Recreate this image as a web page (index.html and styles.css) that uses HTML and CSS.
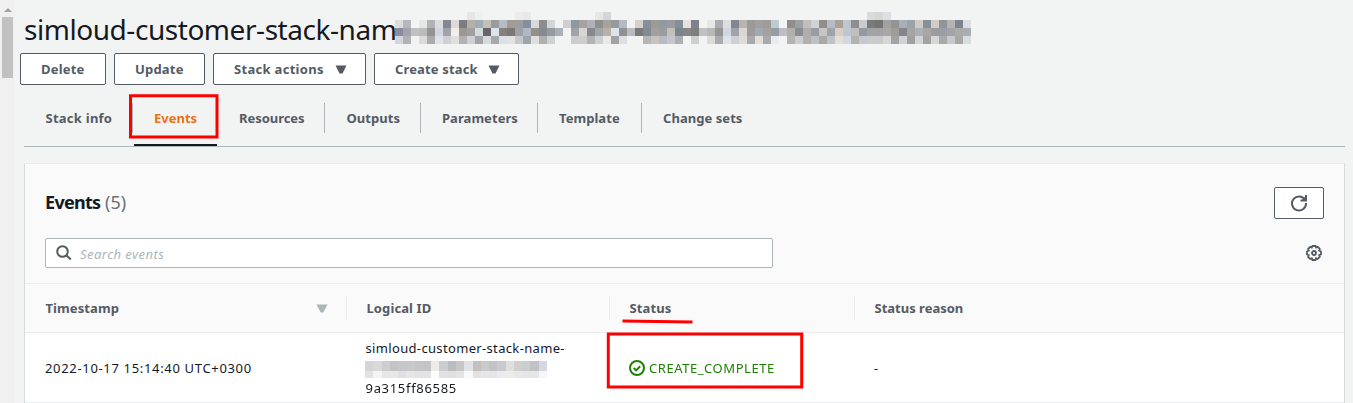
FILE: index.html
```html
<!DOCTYPE html>
<html lang="en"><head><meta charset="utf-8"><title>Stack events</title><link rel="stylesheet" href="styles.css"></head>
<body>
<div class="app">
<aside class="scroll"><i class="up"></i><i class="thumb"></i></aside>
<main>
<h1><span class="t-title">simloud-customer-stack-nam</span><canvas class="mask" id="mask" width="576" height="32"></canvas></h1>
<div class="actions">
<button class="w1"><span>Delete</span></button><button class="w2"><span>Update</span></button><button class="w3"><span>Stack actions</span><svg width="12" height="9"><path d="M.5 .5h11L7.5 8.5h-3z"/></svg></button><button class="w4"><span>Create stack</span><svg width="12" height="9"><path d="M.5 .5h11L7.5 8.5h-3z"/></svg></button>
</div>
<nav><a class="n1"><span>Stack info</span></a><a class="n2 active"><span>Events</span></a><a class="n3"><span>Resources</span></a><a class="n4"><span>Outputs</span></a><a class="n5"><span>Parameters</span></a><a class="n6"><span>Template</span></a><a class="n7"><span>Change sets</span></a></nav>
<section class="panel">
<header>
<div class="head"><h2><b>Events</b> <span>(5)</span></h2><button class="refresh"><svg width="18" height="18" viewBox="0 0 18 18"><path d="M15.2 6.2A7 7 0 1 0 16 9M16 1v5.5h-5.5" fill="none" stroke="#545b64" stroke-width="2"/><path d="M12 5.5l4-3.5v4z"/></svg></button></div>
<div class="filter"><div class="search"><svg width="16" height="16" viewBox="0 0 16 16"><circle cx="6.5" cy="6.5" r="5.3"/><path d="m10.3 10.3 4.5 4.2"/></svg><span>Search events</span></div>
<svg class="gear" width="16" height="16" viewBox="0 0 16 16"><path d="M6.5 1h3l.6 1.6 1.6-.7 2.1 2.1-.7 1.6 1.9.8v3l-1.9.8.7 1.7-2.1 2.1-1.6-.7-.6 1.7h-3l-.7-1.7-1.6.7L2.1 12l.7-1.7L1 9.5v-3l1.8-.9L2.1 4l2.1-2.1 1.6.7z"/><circle cx="8" cy="8" r="2"/></svg></div>
</header>
<div class="row th"><div class="c"><span>Timestamp</span><svg class="sort" width="12" height="9"><path d="M.5 .5h11L7.3 8.5h-2.6z"/></svg></div><div class="c"><span>Logical ID</span></div><div class="c"><span>Status</span></div><div class="c"><span>Status reason</span></div></div>
<div class="row td"><div class="c digits"><span>2022-10-17 15:14:40 UTC+0300</span></div><div class="c logical"><span>simloud-customer-stack-name-</span><canvas id="idmask" width="183" height="20"></canvas><span class="digits">9a315ff86585</span></div><div class="c status"><svg width="16" height="16" viewBox="0 0 16 16"><circle cx="8" cy="8" r="7"/><path d="m4.7 8 2.4 2.4 4.1-4.1"/></svg><span>CREATE_COMPLETE</span></div><div class="c"><span>-</span></div></div>
</section>
</main>
<svg class="marks" width="1353" height="403"><path d="M130.5 95.7H217V137H130.5zM608.3 334H801.7V387H608.3zM622.5 321l70 1"/></svg>
</div>
<script src="mask.js"></script>
</body></html>
```
FILE: styles.css
```css
*{box-sizing:border-box}
body{margin:0;background:#f2f3f3;font:13px/20px "Noto Sans",sans-serif;color:#16191f}
.app{display:flex;height:403px;overflow:hidden;position:relative}
.marks{position:absolute;left:0;top:0;fill:none;stroke:#f00;stroke-width:3;pointer-events:none}
.scroll{width:15px;background:#f0f0f0;padding:8px 2px;display:flex;flex-direction:column;align-items:center}
.up{border:4px solid transparent;border-top:0;border-bottom-color:#a3a3a3;margin-bottom:5px}
.thumb{width:11px;height:61px;background:#c1c1c1}
main{flex:1;display:flex;flex-direction:column}
h1{margin:12px 0 0 9px;height:41px;flex:none;font-size:28px;font-weight:400;line-height:34px;display:flex;align-items:flex-start;white-space:nowrap}
.t-title{width:371px;letter-spacing:-.45px}
.mask{flex:none}
.actions{display:flex;flex:none;gap:8px;margin-left:5px}
button{font:700 13px/20px "Noto Sans",sans-serif;letter-spacing:.3px;height:32px;border:1px solid #545b64;border-radius:2px;background:#fff;color:#545b64;padding:0 18px 0 20px;display:flex;align-items:center;justify-content:space-between;white-space:nowrap}
button svg{fill:#545b64}
.w1,.w2{letter-spacing:.2px}
.w1{width:86px}.w2{width:91px}.w3{width:153px}.w4{width:145px}
.w4{letter-spacing:.15px}
nav{display:flex;flex:none;margin:18px 8px 16px 9px;height:44px;border-bottom:1px solid #aab7b8;font-weight:700;color:#545b64;letter-spacing:.05px}
nav a{height:30px;padding:5px 0 5px 21px;border-right:1px solid #aab7b8;white-space:nowrap}
.n1{width:109px}.n2{width:84px}.n3{width:108px}.n4{width:96px}.n5{width:117px}.n6{width:104px}
nav .n1{letter-spacing:.25px;padding-left:21.5px}
nav .n3{padding-left:22px;letter-spacing:-.05px}
nav .n4{padding-left:21.5px}
nav .n7{border:0}
nav .active{color:#ec7211;height:43px;border-right:0;margin-left:1px;width:83px;padding-left:20px;border-bottom:2px solid #16191f;letter-spacing:0}
.panel{margin:0 8px 0 9px;height:250px;flex:none;border:1px solid #d5dbdb;border-top-color:#eaeded;background:#fff}
header{background:#fafafa;height:119px}
.head{display:flex;justify-content:space-between;padding:23px 20px 0}
h2{margin:-1px 0 1px;font-size:18px;font-weight:400;line-height:32px;letter-spacing:-.7px;word-spacing:.6px}
h2 span{color:#687078;letter-spacing:0}
.refresh{width:50px;padding:0 15px}
.filter{display:flex;justify-content:space-between;padding:19px 22px 0 20px;align-items:center}
.search{width:728px;height:30px;border:1px solid #aab7b8;border-radius:2px;background:#fff;display:flex;align-items:center;gap:8px;padding-left:10px;color:#aab7b8;font-style:italic;letter-spacing:.45px}
.search span{padding-top:2px}
.search svg,.gear{fill:none;stroke:#545b64;stroke-width:2}
.gear{stroke-width:1.8}
.row{display:grid;grid-template-columns:321px 263px 245px 1fr;border-top:1px solid #eaeded}
.th{height:49px;background:#fafafa;color:#545b64;font-weight:700;align-items:center;letter-spacing:.1px}
.th .c{height:24px;border-right:1px solid #eaeded;padding:0 18px 0 20.5px;justify-content:space-between}
.th .c+.c{padding-left:20.5px}
.th .c:nth-child(1){width:322px}
.th .c:nth-child(2){width:264px}
.th .c:nth-child(3){width:246px}
.th .c:nth-child(4){letter-spacing:0;border:0}
.sort{fill:#aab7b8}
.c{padding-left:20px;display:flex;align-items:center}
.td{height:71px;border-bottom:1px solid #eaeded}
.digits{letter-spacing:.67px}
.td .logical{flex-direction:column;align-items:start;justify-content:center;letter-spacing:.34px;padding-left:19px}
.logical span{margin-left:.5px}
.logical .digits{letter-spacing:.69px}
.status{color:#1d8102;gap:4px;letter-spacing:.56px}
.status svg{fill:none;stroke:#1d8102;stroke-width:2}
```
FILE: mask.js
```js
// Mosaic blocks that hide the account-specific part of a name; "-" leaves a cell empty.
function mosaic(id, rows, width) {
  const ctx = document.getElementById(id).getContext('2d');
  rows.forEach(({ y, h, cells }) => cells.trim().split(/\s+/).forEach((c, i) => {
    if (c === '-') return;
    const x = Math.round(i * width);
    ctx.fillStyle = '#' + c;
    ctx.fillRect(x, y, Math.round((i + 1) * width) - x, h);
  }));
}
const gap = n => '- '.repeat(n);
mosaic('mask', [
  { y: 0, h: 8, cells: gap(9) + 'e6e5e3 edf0f1 ' + gap(4) + 'efebea e9e9ea ' + gap(8) + 'e6e6e6 d2d6da ' + gap(32) + 'dadada d6d8d6 dcdfe3' },
  { y: 8, h: 8, cells: `dddddd b4b7bf - e6e6e6 b0b2b6 dcdcdc 828892 dcdad9 7c7c7c b5b0aa a2acb5 c4bfb9 999b9f b6bbc4 a49b94 9b9d9f 868f9a d6dadb 8f8d8c d1d6d9 - d0cecf 8e989e a5a29f
    aeb2ba 918f8d a6a29d 969a9d b5bbc6 - d4d0cb 868f9a 9c9a97 929a9e 9a9b9e 868f98 e4e2de 7d828b - e6e6e5 acadb2 dedede 81868f b8b4b0 9c9a96 a0a0a0 9e9c98 c0cad2
    - 908e8d 9ca2a4 c0bfbd cfd3d6 918d89 b4bdc6 aba095 bcc6cf 8f8e8f c9cccf 7a7a7a 747476 a3a09d 929595 abaeb5 9ba2ac d2cbc4 868f9a d1ccc6 909597 b4b5b3 7e848e dbdfe4` },
  { y: 16, h: 8, cells: `868e9b a2a4aa c0c1c1 bcbcbc 959490 cdd8e4 a0a4a8 f0efeb 9c9891 a2a09e d6dadd 68656a dbe3ed 86807c 7a7876 a0a1a4 abbac6 958f88 828a94 989a9d acafb8 - a0a3a7 d8d6d4
    87888c a0a5a9 bab0a8 dbe4ef 909192 b8bbc2 7c7a78 828a94 a0a09f 9b9c9d c2c0bd 7d838d 868686 7e7e7e c0c2c2 b8b8b8 959490 cdd8e4 a0a4a8 dbd7d4 a09b96 a0aab5 a5a29d 959ca6
    bcbfc6 b1b0ae 888d90 aeaeae 989da3 c6c6c6 9da3a6 dacdc4 bcc7d1 c0bfbd 9699a0 a1a3a6 a1a3a6 a8a8a8 a09c98 84848a a5a5a5 a9b2bc aca5a2 9a9da0 999da4 a2a5a8 abaaa8 a9aeb5` },
  { y: 24, h: 8, cells: `d2d5d9 b0b2b9 - dedad9 a9abaf dfe3e7 ced0d4 dfdfde b0b1b3 ced0d3 a2a5a6 d6dadb a5a9aa dce1e5 e4e2de c6c7ca a0a4a8 dcdedf b2b0ae ced2d5 - - caccd0 cfccca
    b0b4b8 cdd0d2 ebe9e5 a0a2a4 dce0e4 - - b5b5b5 c6c3c0 b9bbc2 c5c6cb acaeb2 - cdcfd1 - dedad6 a9acaf dfe3e7 cfd0d4 dfddda a8aaac e0dedb a8a9aa e9ecef
    - b6b3b0 caced0 b0afae bec1c1 a9a9a9 bfc3c6 e2dfda d3d9e3 b4b3b1 c5c8cf cacaca cacaca d9d5d2 a2a3a4 d0d3d5 a0a09f d3d4d6 a2a2a3 d6d7d5 a9a9a9 c8c9cc a8a8a7 d9dde2` }
], 8);
mosaic('idmask', [
  { y: 3, h: 10, cells: 'd5d5d6 d9d9d9 cccecd c3c3c4 c6c7cb c8c8c8 c3c4c9 c3c4c8 ebebe9 cccdd1 bbbcbf c8c6c4 dfe3e7 c3c0be c8cace c1c3c7 c8cace dfdfdf d3cecd cbcccf c1c2c4 d5d9df' },
  { y: 13, h: 9, cells: 'e1e2e4 f3f3f3 e6e6e6 e8e8ea dfe0e3 e6e6e6 e2e2e4 e3e3e5 fdfdfb e2e2e4 dfdfe0 e4e4e5 f9f9f9 e3e2e1 e6e6e8 e5e5e7 ebebeb ececea e8e8e6 e6e6e8 e6e6e7 f5f6f9' }
], 8.27);
```
